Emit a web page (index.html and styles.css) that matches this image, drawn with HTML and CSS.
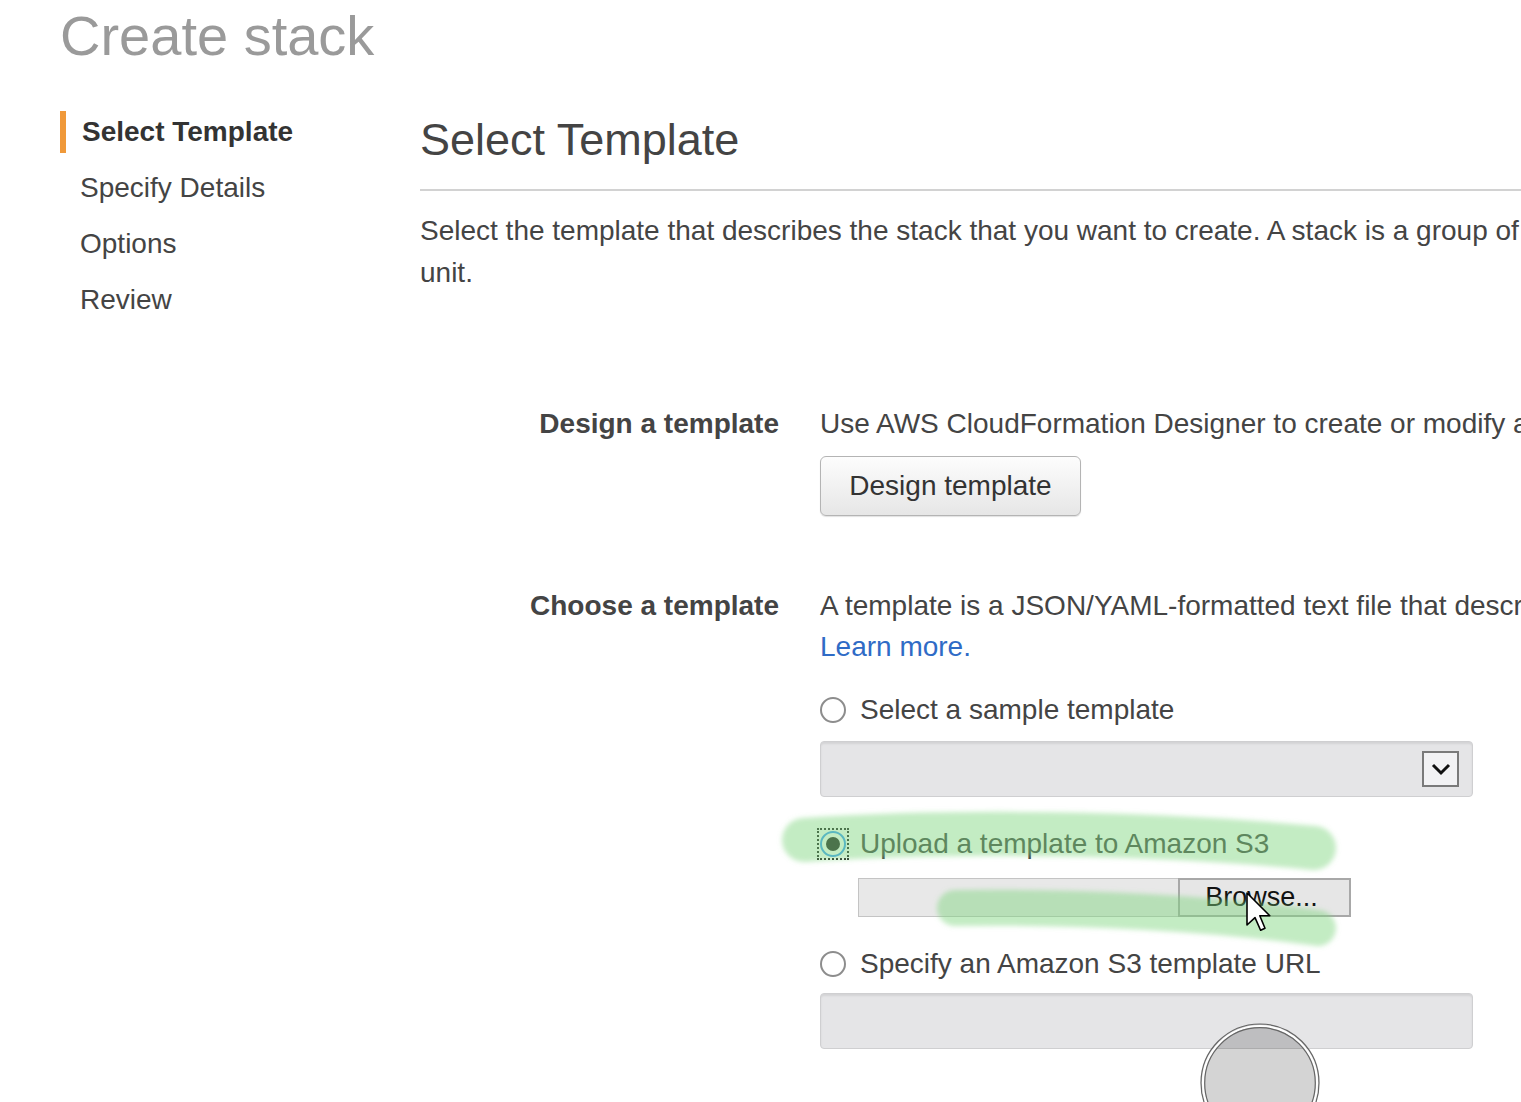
FILE: index.html
```html
<!DOCTYPE html>
<html lang="en">
<head>
<meta charset="utf-8">
<title>Create stack</title>
<link rel="stylesheet" href="styles.css">
</head>
<body>
<div class="page">
  <h1 class="title">Create stack</h1>
  <div class="layout">
    <nav class="steps">
      <div class="step active">Select Template</div>
      <div class="step">Specify Details</div>
      <div class="step">Options</div>
      <div class="step">Review</div>
    </nav>
    <main class="main">
      <h2 class="heading">Select Template</h2>
      <hr class="rule">
      <p class="intro">Select the template that describes the stack that you want to create. A stack is a group of related resources that you manage as a single<br>unit.</p>

      <div class="form">
        <div class="label">Design a template</div>
        <div class="field">
          <div class="desc">Use AWS CloudFormation Designer to create or modify an existing template. Learn more.</div>
          <button class="btn">Design template</button>
        </div>

        <div class="label row2">Choose a template</div>
        <div class="field row2">
          <div class="desc">A template is a JSON/YAML-formatted text file that describes your stack's resources and their properties.</div>
          <a class="link" href="#">Learn more.</a>

          <label class="radio-row first">
            <span class="radio"></span>
            <span>Select a sample template</span>
          </label>
          <div class="select">
            <span class="select-arrow">
              <svg width="22" height="14" viewBox="0 0 22 14"><path d="M3 3 L11 11 L19 3" fill="none" stroke="#111" stroke-width="3"/></svg>
            </span>
          </div>

          <label class="radio-row">
            <span class="focus"><span class="radio checked"></span></span>
            <span>Upload a template to Amazon S3</span>
          </label>
          <div class="file">
            <span class="file-text"></span>
            <span class="file-btn">Browse...</span>
          </div>

          <label class="radio-row">
            <span class="radio"></span>
            <span>Specify an Amazon S3 template URL</span>
          </label>
          <div class="text-input"></div>
        </div>
      </div>
    </main>
  </div>
</div>

<svg class="overlay" width="1521" height="1102" viewBox="0 0 1521 1102">
  <defs>
    <filter id="soft" x="-10%" y="-50%" width="120%" height="200%">
      <feGaussianBlur stdDeviation="2.5"/>
    </filter>
  </defs>
  <g filter="url(#soft)" fill="none" stroke="rgb(125,213,125)" stroke-opacity="0.46" stroke-linecap="round">
    <path d="M804 840 C 950 830, 1150 832, 1314 848" stroke-width="44"/>
    <path d="M955 908 C 1080 906, 1220 914, 1318 928" stroke-width="36"/>
  </g>
  <g class="cursor" transform="translate(1247 893) scale(2)">
    <path d="M0 0 L0 16 L4 12.3 L6.8 18.6 L9 17.6 L6.4 11.4 L11.4 11.4 Z" fill="#fff" stroke="#000" stroke-width="0.8" stroke-linejoin="round"/>
  </g>
  <g class="click">
    <circle cx="1260" cy="1083" r="59" fill="rgba(0,0,0,0.17)" stroke="#666" stroke-width="1.2"/>
    <circle cx="1260" cy="1083" r="57" fill="none" stroke="#fff" stroke-width="2.2"/>
    <circle cx="1260" cy="1083" r="55.3" fill="none" stroke="#666" stroke-width="1.2"/>
  </g>
</svg>
</body>
</html>
```

FILE: styles.css
```css
html, body {
  margin: 0;
  padding: 0;
  width: 1521px;
  height: 1102px;
  overflow: hidden;
  background: #fff;
}

body {
  font-family: "Liberation Sans", Arial, sans-serif;
  color: #444;
  position: relative;
}

.page {
  padding-left: 60px;
}

.title {
  margin: 0;
  padding-top: 4px;
  font-size: 56px;
  line-height: 64px;
  font-weight: normal;
  color: #9a9a9a;
  white-space: nowrap;
}

.layout {
  display: flex;
  align-items: flex-start;
  margin-top: 43px;
}

.steps {
  width: 360px;
  flex: none;
  display: flex;
  flex-direction: column;
  gap: 14px;
}

.step {
  font-size: 28px;
  line-height: 42px;
  padding-left: 20px;
  color: #444;
  white-space: nowrap;
}

.step.active {
  border-left: 6px solid #f0993a;
  padding-left: 16px;
  font-weight: bold;
  color: #333;
}

.main {
  flex: none;
  width: 1500px;
}

.heading {
  margin: 3px 0 0;
  font-size: 45px;
  line-height: 52px;
  height: 54px;
  font-weight: normal;
  color: #444;
}

.rule {
  margin: 21px 0 0;
  border: 0;
  height: 2px;
  background: #d2d2d2;
}

.intro {
  margin: 19px 0 0;
  font-size: 28px;
  line-height: 42px;
  white-space: nowrap;
}

.form {
  margin-top: 108px;
  display: grid;
  grid-template-columns: 359px 1fr;
  column-gap: 41px;
  font-size: 28px;
  line-height: 42px;
}

.label {
  text-align: right;
  font-weight: bold;
  color: #444;
  white-space: nowrap;
  padding-top: 1px;
}

.row2 {
  margin-top: 68px;
}

.field {
  display: flex;
  flex-direction: column;
  align-items: flex-start;
}

.desc {
  white-space: nowrap;
  padding-top: 1px;
  height: 41px;
}

.btn {
  margin-top: 12px;
  width: 261px;
  height: 60px;
  border: 1px solid #b4b4b4;
  border-radius: 6px;
  background: linear-gradient(#fdfdfd, #e6e6e6);
  box-shadow: 0 1px 1px rgba(0, 0, 0, 0.12);
  font-family: inherit;
  font-size: 28px;
  color: #333;
  padding: 0;
}

.link {
  color: #2f6bc6;
  text-decoration: none;
}

.radio-row {
  display: flex;
  align-items: center;
  gap: 14px;
  margin-top: 25px;
  height: 42px;
  color: #444;
  padding-top: 1px;
}

.radio-row.first {
  margin-top: 20px;
}

.radio {
  width: 22px;
  height: 22px;
  border: 2px solid #8d8d8d;
  border-radius: 50%;
  background: #fff;
  flex: none;
  box-sizing: content-box;
  position: relative;
}

.radio.checked {
  border-color: #3e9ff9;
}

.radio.checked::after {
  content: "";
  position: absolute;
  left: 4px;
  top: 4px;
  width: 14px;
  height: 14px;
  border-radius: 50%;
  background: #222;
}

.focus {
  margin-left: -3px;
  margin-right: -3px;
  padding: 1px;
  border: 2px dotted #222;
  display: flex;
}

.select {
  margin-top: 10px;
  width: 653px;
  height: 56px;
  box-sizing: border-box;
  border: 1px solid #cfcfd1;
  border-radius: 4px;
  background: #e5e5e7;
  box-shadow: inset 0 2px 2px rgba(0, 0, 0, 0.08);
  display: flex;
  align-items: center;
  justify-content: flex-end;
  padding-right: 13px;
}

.select-arrow {
  width: 37px;
  height: 36px;
  box-sizing: border-box;
  border: 2px solid #7a7a7a;
  background: #f2f2f4;
  display: flex;
  align-items: center;
  justify-content: center;
}

.file {
  margin-top: 13px;
  margin-left: 38px;
  display: flex;
  height: 39px;
}

.file-text {
  width: 320px;
  box-sizing: border-box;
  border: 1px solid #c4c4c4;
  border-right: 0;
  background: #e8e8e8;
}

.file-btn {
  width: 173px;
  box-sizing: border-box;
  border: 2px solid #a8a8a8;
  background: #e6e6e6;
  font-size: 27px;
  line-height: 35px;
  text-align: center;
  color: #111;
  padding-right: 6px;
}

.text-input {
  margin-top: 8px;
  width: 653px;
  height: 56px;
  box-sizing: border-box;
  border: 1px solid #cfcfd1;
  border-radius: 4px;
  background: #e5e5e7;
  box-shadow: inset 0 2px 2px rgba(0, 0, 0, 0.08);
}

.overlay {
  position: absolute;
  left: 0;
  top: 0;
  pointer-events: none;
}
```
